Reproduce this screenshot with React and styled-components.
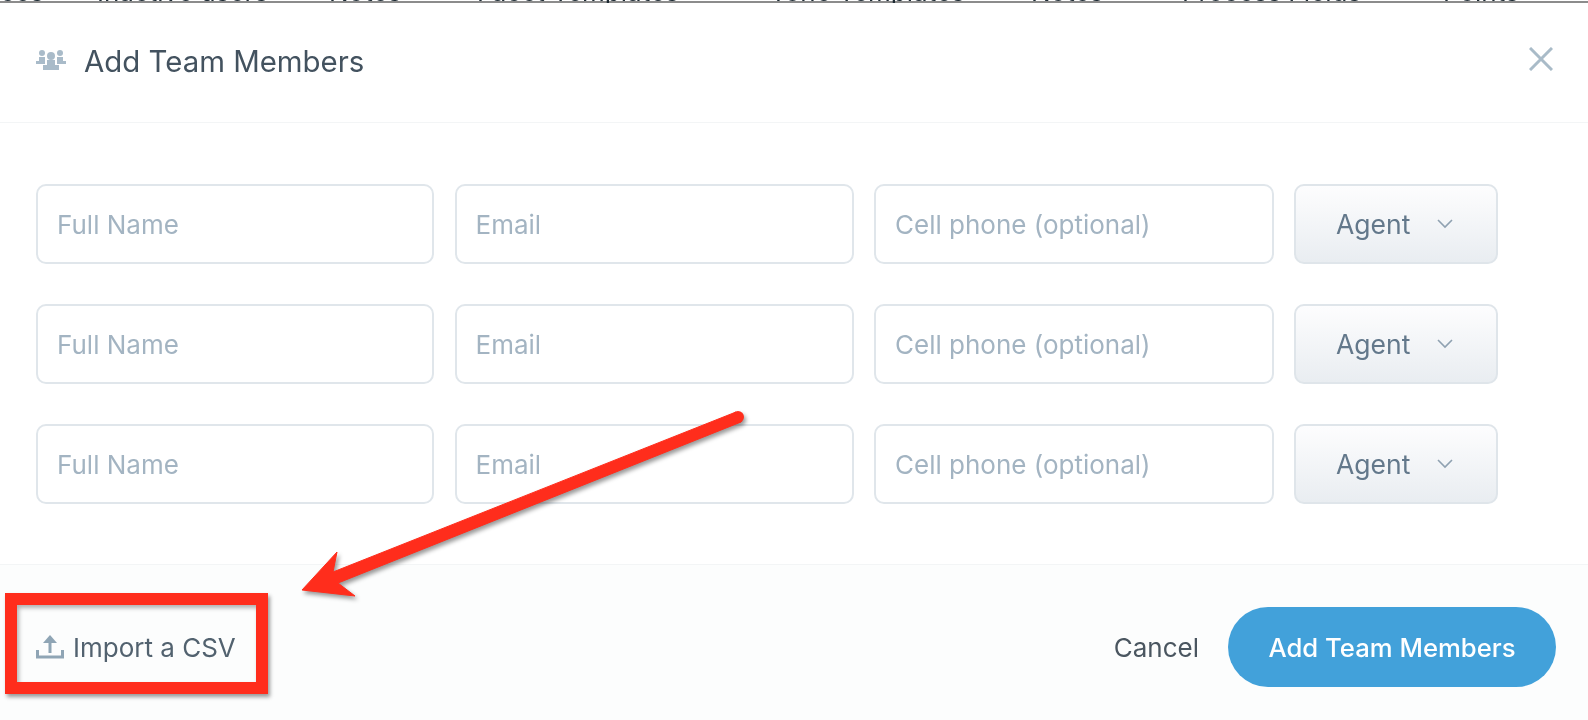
import React from 'react';
import styled, {createGlobalStyle} from 'styled-components';

const GlobalStyle = createGlobalStyle`
  html, body {
    margin: 0;
    padding: 0;
    background: #fff;
  }
  * {
    box-sizing: border-box;
  }
`;

const Modal = styled.div`
  position: relative;
  width: 1588px;
  height: 720px;
  overflow: hidden;
  display: flex;
  flex-direction: column;
  background: #fff;
  font-family: Inter, Lato, sans-serif;
  filter: blur(0.4px);
`;

const PageBehind = styled.div`
  flex: none;
  height: 3px;
  overflow: hidden;
  display: grid;
  grid-template-columns: 97px 232px 148px 293px 261px 151px 261px 1fr;
  background: linear-gradient(#8c8c8c, #8c8c8c) 0 1px / 100% 2px no-repeat;
  font-size: 26px;
  line-height: 26px;
  color: #1d2a33;
  white-space: nowrap;
  span {
    margin-top: -21px;
  }
`;

const Header = styled.header`
  flex: none;
  height: 120px;
  display: flex;
  align-items: center;
  padding: 0 36px 2px;
  border-bottom: 1px solid #f3f5f6;
`;

const TeamGlyph = styled.svg`
  margin-top: -3px;
`;

const Title = styled.h2`
  flex: 1;
  margin: 0 0 0 18px;
  font-size: 29.4px;
  font-weight: 400;
  color: #43525f;
`;

const CloseIcon = styled.svg`
  margin: -5px -1px 0 0;
  color: #a9bbc8;
`;

const Body = styled.div`
  flex: 1;
  display: flex;
  flex-direction: column;
  gap: 40px;
  padding: 61px 0 0 36px;
`;

const Row = styled.div`
  display: grid;
  grid-template-columns: 398px 399px 399.5px 204px;
  column-gap: 20.5px;
  height: 80px;
`;

const Field = styled.input`
  width: 100%;
  height: 100%;
  padding: 0 19px;
  border: 2px solid #e0e6eb;
  border-radius: 10px;
  background: #fff;
  outline: none;
  font-family: inherit;
  font-size: 26px;
  color: #43525f;
  &::placeholder {
    color: #a3b4c2;
    opacity: 1;
  }
`;

const RoleSelect = styled.button`
  display: flex;
  align-items: center;
  padding: 0 0 0 40px;
  gap: 27px;
  border: 2px solid #dfe5ea;
  border-radius: 10px;
  background: linear-gradient(#fdfdfe, #e9edf1);
  font-family: inherit;
  font-size: 26.5px;
  color: #63788b;
`;

const Footer = styled.footer`
  flex: none;
  height: 156px;
  display: flex;
  align-items: flex-start;
  justify-content: space-between;
  padding: 42px 32px 0 36px;
  border-top: 1px solid #f3f5f6;
  background: #fcfdfd;
`;

const ImportLink = styled.a`
  display: flex;
  align-items: center;
  gap: 9px;
  height: 80px;
  font-size: 26px;
  color: #52626f;
`;

const Actions = styled.div`
  display: flex;
  align-items: center;
  gap: 29px;
`;

const CancelLink = styled.a`
  font-size: 26px;
  color: #4a5660;
`;

const SubmitButton = styled.button`
  width: 328px;
  height: 80px;
  border: none;
  border-radius: 40px;
  background: #42a1da;
  color: #fff;
  font-family: inherit;
  font-size: 25.7px;
  font-weight: 500;
`;

// the red markup drawn on top of the screenshot
const HighlightBox = styled.div`
  position: absolute;
  left: 5px;
  top: 593px;
  width: 263px;
  height: 101px;
  border: 12px solid #ff2d1c;
  box-shadow: 2px 3px 4px rgba(0, 0, 0, 0.4), inset 2px 3px 4px rgba(0, 0, 0, 0.3);
`;

const ArrowLayer = styled.svg`
  position: absolute;
  left: 0;
  top: 0;
  filter: drop-shadow(2px 3px 2px rgba(0, 0, 0, 0.4));
`;

const TeamIcon = () => (
    <TeamGlyph width="30" height="22" viewBox="0 0 30 22" fill="#a9bbc9">
        <circle cx="6" cy="4" r="3"/>
        <circle cx="24" cy="4" r="3"/>
        <path d="M3 8h6v4H3zM21 8h6v4h-6zM0 12h9v3H0zM21 12h9v3h-9z"/>
        <circle cx="15" cy="7" r="4"/>
        <path d="M11 11h8v5h-8zM7 16h16v5H7z"/>
    </TeamGlyph>
);

const UploadIcon = () => (
    <svg width="28" height="24" viewBox="0 0 28 24" fill="none" stroke="#8fa5b5" strokeWidth="3">
        <path d="M1.5 15v7h25v-7"/>
        <path d="M14 18V3"/>
        <path d="M14 0l7 8H7z" fill="#8fa5b5" stroke="none"/>
    </svg>
);

const Chevron = () => (
    <svg width="16" height="10" viewBox="0 0 16 10" fill="none" stroke="#8fa1b1" strokeWidth="1.6">
        <path d="M1 1l7 7 7-7"/>
    </svg>
);

const behind = ['ces', 'Inactive users', 'Notes', 'Facet Templates', 'Tone Templates', 'Notes', 'Process Fields', 'Points'];
const rows = [0, 1, 2];

const App = () => {
    return (
        <Modal>
            <GlobalStyle/>
            <PageBehind>
                {behind.map((text, i) => <span key={i}>{text}</span>)}
            </PageBehind>
            <Header>
                <TeamIcon/>
                <Title>Add Team Members</Title>
                <CloseIcon width="24" height="24" viewBox="0 0 24 24" fill="none" stroke="currentColor" strokeWidth="3">
                    <path d="M1 1l22 22M23 1L1 23"/>
                </CloseIcon>
            </Header>
            <Body>
                {rows.map(row => (
                    <Row key={row}>
                        <Field placeholder={'Full Name'}/>
                        <Field placeholder={'Email'}/>
                        <Field placeholder={'Cell phone (optional)'}/>
                        <RoleSelect>Agent <Chevron/></RoleSelect>
                    </Row>
                ))}
            </Body>
            <Footer>
                <ImportLink><UploadIcon/>Import a CSV</ImportLink>
                <Actions>
                    <CancelLink>Cancel</CancelLink>
                    <SubmitButton>Add Team Members</SubmitButton>
                </Actions>
            </Footer>
            <HighlightBox/>
            <ArrowLayer width="1588" height="720" viewBox="0 0 1588 720">
                <path
                    d="M736 412 L741 422 L338 583 L355 596 L302 590 L337 552 L333 572 Z"
                    fill="#ff2d1c"
                    stroke="#ff2d1c"
                    strokeWidth="1"
                    strokeLinejoin="round"
                />
                <circle cx="738" cy="417" r="6" fill="#ff2d1c"/>
            </ArrowLayer>
        </Modal>
    );
};

export default App;
